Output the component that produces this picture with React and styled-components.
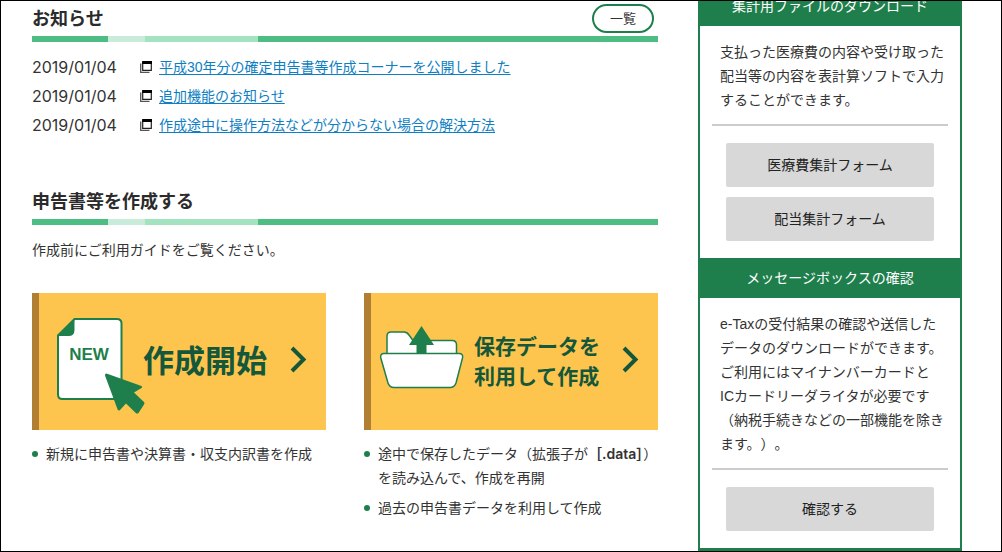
import React from "react";
import styled, { createGlobalStyle } from "styled-components";

const GlobalStyle = createGlobalStyle`
  * {
    box-sizing: border-box;
  }

  body {
    margin: 0;
    background: #fff;
    color: #333;
    font-family: "Liberation Sans", "Noto Sans CJK JP", sans-serif;
    font-size: 14px;
    line-height: 24px;
  }
`;

const Page = styled.div`
  display: flex;
  align-items: flex-start;
  gap: 40px;
  min-height: 100vh;
  padding: 0 39px 0 31px;
  border: 1px solid #000;
  overflow: hidden;
`;

const Main = styled.main`
  flex: 1;
  min-width: 0;
`;

const SectionHead = styled.div`
  display: flex;
  align-items: center;
  justify-content: space-between;
  height: 35px;
  padding-right: 4px;
`;

const Heading = styled.h2`
  margin: 0;
  color: #2b2b2b;
  font-size: 18px;
  font-weight: 700;
`;

const ColorBar = styled.div`
  height: 6px;
  background: linear-gradient(
    to right,
    #4dbd84 76px,
    #c8ecd9 76px 113px,
    #a3e3c1 113px 226px,
    #4dbd84 226px
  );
`;

const ListButton = styled.button`
  height: 29px;
  padding: 0 16px;
  border: 2px solid #1f7f4c;
  border-radius: 15px;
  background: #fff;
  color: #333;
  font-family: inherit;
  font-size: 13px;
  line-height: 24px;
  cursor: pointer;
`;

const NewsList = styled.ul`
  display: flex;
  flex-direction: column;
  gap: 5px;
  margin: 0;
  padding: 13px 0 47px;
  list-style: none;
`;

const NewsItem = styled.li`
  display: flex;
  align-items: center;
`;

const NewsDate = styled.time`
  width: 108px;
  font-family: Inter, sans-serif;
  font-size: 16px;
`;

const NewsLink = styled.a`
  margin-left: 7px;
  color: #0f7fc3;
  text-underline-offset: 2px;
`;

const Lead = styled.p`
  margin: 0;
  padding: 13px 0 31px;
`;

const CardGrid = styled.div`
  display: grid;
  grid-template-columns: 1fr 1fr;
  gap: 38px;
`;

const Card = styled.a`
  display: flex;
  align-items: center;
  gap: ${(props) => props.$gap};
  height: 137px;
  padding: 0 19px 0 ${(props) => props.$inset};
  border-left: 7px solid #b17f34;
  background: #fdc54d;
  color: #14573a;
  text-decoration: none;

  svg {
    flex: none;
    overflow: visible;
  }
`;

const CardLabel = styled.span`
  flex: 1;
  font-size: ${(props) => (props.$large ? "31px" : "21px")};
  font-weight: 700;
  line-height: 30px;
  white-space: nowrap;
`;

const BulletList = styled.ul`
  display: flex;
  flex-direction: column;
  gap: 6px;
  margin: 0;
  padding: 12px 0 0;
  list-style: none;
`;

const Bullet = styled.li`
  display: flex;
  gap: 8px;

  &::before {
    content: "";
    flex: none;
    width: 6px;
    height: 6px;
    margin-top: 9px;
    border-radius: 50%;
    background: #1f7f4c;
  }
`;

const FileType = styled.strong`
  font-family: Inter, "Noto Sans CJK JP", sans-serif;
  font-weight: 600;
`;

const Sidebar = styled.aside`
  flex: none;
  width: 264px;
  margin-top: -15px;
  border: solid #1f7f4c;
  border-width: 0 2px 3px;
`;

const SideTitle = styled.h3`
  margin: 0;
  padding: 8px 0;
  background: #1f7f4c;
  color: #fff;
  font-size: 14px;
  font-weight: 400;
  text-align: center;
`;

const SideBody = styled.div`
  padding: 14px 12px 17px;
`;

const SideText = styled.p`
  margin: 0;
  padding: 0 0 12px 8px;
  border-bottom: 2px solid #ccc;
  white-space: nowrap;
  text-spacing-trim: space-all;
`;

const SideButtons = styled.div`
  display: flex;
  flex-direction: column;
  gap: 10px;
  padding: 17px 14px 0;
`;

const SideButton = styled.button`
  height: 44px;
  padding: 0 6px 2px;
  border: 0;
  border-radius: 2px;
  background: #d8d8d8;
  color: #222;
  font-family: inherit;
  font-size: 14px;
  cursor: pointer;
`;

const WindowIcon = () => (
  <svg width="12" height="12" viewBox="0 0 12 12" aria-hidden="true">
    <path d="M.7 2.5v8.8h8.8" fill="none" stroke="#555" strokeWidth="1.3" />
    <path d="M2.7 1h8.6v8.3H2.7z" fill="#fff" stroke="#222" strokeWidth="1.2" />
    <path d="M2.2 0h9.8v3H2.2z" fill="#000" />
  </svg>
);

const NewFileIcon = () => (
  <svg width="86" height="104" viewBox="0 0 86 104" aria-hidden="true">
    <path
      d="M17.5 9H60q4.5 0 4.5 4.5V84.500q0 4.500-4.500 4.500H5.500Q1 89 1 84.500V25.500z"
      fill="#fff"
      stroke="#1f7f4c"
      strokeWidth="2"
    />
    <path d="M17.500 8.500V20q0 6-6 6H.5z" fill="#1f7f4c" />
    <text
      x="32"
      y="50"
      textAnchor="middle"
      fill="#1f7f4c"
      fontFamily="Liberation Sans, sans-serif"
      fontSize="17"
      fontWeight="700"
    >
      NEW
    </text>
    <path
      d="M49.500 63.500L84.500 76q1.500 1 0 2L77 82.500L87 92q1 1.200 0 2.400L81.500 103q-1.400 1-2.700 0L69 93.500L63 100q-1.400 1.400-2.400-.5L48 65.500q-.3-2 1.500-2z"
      fill="#1f7f4c"
    />
  </svg>
);

const FolderIcon = () => (
  <svg width="84" height="72" viewBox="0 0 84 72" aria-hidden="true">
    <g fill="#fff" stroke="#1f7f4c" strokeWidth="1.500" strokeLinejoin="round">
      <path d="M7 28V10q0-4 4-4h13q3 0 5 3l4 5.500H72q4.500 0 4.500 4.500v9z" />
      <path d="M4 27.500H79q4.500 0 3.500 4.500L76 57q-1.500 4.500-6 4.500H14q-4.500 0-6-4.500L.8 32Q0 27.500 4 27.500z" />
    </g>
    <path d="M41.500 0L54 19h-7.500v8h-10v-8H29z" fill="#1f7f4c" />
  </svg>
);

const Chevron = () => (
  <svg width="17" height="32" viewBox="0 0 17 32" aria-hidden="true">
    <path d="M2 2l11.500 11.500L2 25" fill="none" stroke="#14573a" strokeWidth="4" />
  </svg>
);

const news = [
  "平成30年分の確定申告書等作成コーナーを公開しました",
  "追加機能のお知らせ",
  "作成途中に操作方法などが分からない場合の解決方法",
];

const App = () => {
  return (
    <>
      <GlobalStyle />
      <Page lang="ja">
        <Main>
          <SectionHead>
            <Heading>お知らせ</Heading>
            <ListButton type="button">一覧</ListButton>
          </SectionHead>
          <ColorBar />
          <NewsList>
            {news.map((title) => (
              <NewsItem key={title}>
                <NewsDate dateTime="2019-01-04">2019/01/04</NewsDate>
                <WindowIcon />
                <NewsLink href="#">{title}</NewsLink>
              </NewsItem>
            ))}
          </NewsList>

          <SectionHead>
            <Heading>申告書等を作成する</Heading>
          </SectionHead>
          <ColorBar />
          <Lead>作成前にご利用ガイドをご覧ください。</Lead>

          <CardGrid>
            <div>
              <Card href="#" $inset="18px" $gap="0">
                <NewFileIcon />
                <CardLabel $large>作成開始</CardLabel>
                <Chevron />
              </Card>
              <BulletList>
                <Bullet>新規に申告書や決算書・収支内訳書を作成</Bullet>
              </BulletList>
            </div>
            <div>
              <Card href="#" $inset="9px" $gap="10px">
                <FolderIcon />
                <CardLabel>
                  保存データを
                  <br />
                  利用して作成
                </CardLabel>
                <Chevron />
              </Card>
              <BulletList>
                <Bullet>
                  <span>
                    途中で保存したデータ（拡張子が<FileType>［.data］</FileType>）
                    <br />
                    を読み込んで、作成を再開
                  </span>
                </Bullet>
                <Bullet>過去の申告書データを利用して作成</Bullet>
              </BulletList>
            </div>
          </CardGrid>
        </Main>

        <Sidebar>
          <SideTitle>集計用ファイルのダウンロード</SideTitle>
          <SideBody>
            <SideText>
              支払った医療費の内容や受け取った
              <br />
              配当等の内容を表計算ソフトで入力
              <br />
              することができます。
            </SideText>
            <SideButtons>
              <SideButton type="button">医療費集計フォーム</SideButton>
              <SideButton type="button">配当集計フォーム</SideButton>
            </SideButtons>
          </SideBody>
          <SideTitle>メッセージボックスの確認</SideTitle>
          <SideBody>
            <SideText>
              e-Taxの受付結果の確認や送信した
              <br />
              データのダウンロードができます。
              <br />
              ご利用にはマイナンバーカードと
              <br />
              ICカードリーダライタが必要です
              <br />
              （納税手続きなどの一部機能を除き
              <br />
              ます。）。
            </SideText>
            <SideButtons>
              <SideButton type="button">確認する</SideButton>
            </SideButtons>
          </SideBody>
        </Sidebar>
      </Page>
    </>
  );
};

export default App;
